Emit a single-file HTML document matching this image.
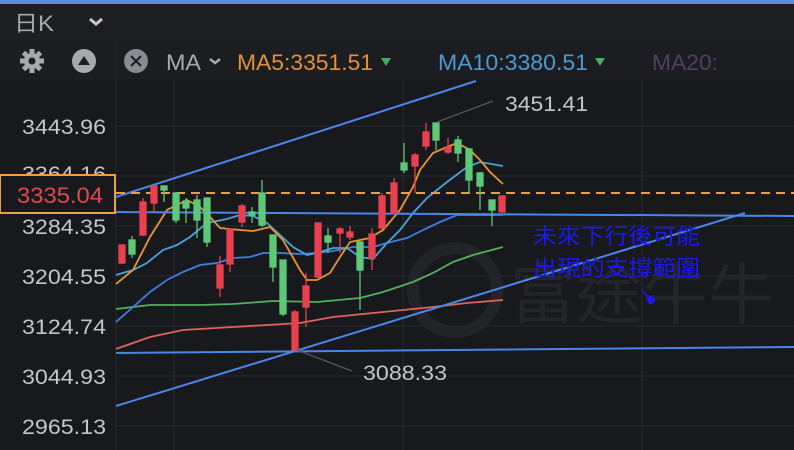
<!DOCTYPE html>
<html><head><meta charset="utf-8"><style>
html,body{margin:0;padding:0;background:#18191d;width:794px;height:450px;overflow:hidden}
svg{display:block}
text{font-family:"Liberation Sans","Noto Sans CJK TC",sans-serif}
</style></head><body>
<svg width="794" height="450" viewBox="0 0 794 450" xmlns="http://www.w3.org/2000/svg">
<rect x="0" y="0" width="794" height="450" fill="#18191d"/>
<rect x="0" y="0" width="794" height="4" fill="#5a8ee6"/>
<rect x="0" y="4" width="794" height="36" fill="#1e1f23"/>
<rect x="0" y="40" width="794" height="40" fill="#1c1d21"/>
<text x="14" y="31" font-size="22" fill="#a8a9ad" textLength="40" lengthAdjust="spacingAndGlyphs">日K</text>
<path d="M90 19 l6 5 l6 -5" stroke="#c8c8c8" stroke-width="3" fill="none"/>
<g transform="translate(32,61)" fill="#a8a9ad">
<circle r="8"/>
<rect x="-2.5" y="-12" width="5" height="24"/>
<rect x="-2.5" y="-12" width="5" height="24" transform="rotate(45)"/>
<rect x="-2.5" y="-12" width="5" height="24" transform="rotate(90)"/>
<rect x="-2.5" y="-12" width="5" height="24" transform="rotate(135)"/>
<circle r="3.5" fill="#1c1d21"/>
</g>
<circle cx="84" cy="61" r="12" fill="#a8a9ad"/>
<path d="M78 65 L84 56 L90 65Z" fill="#1c1d21"/>
<line x1="116" y1="40" x2="116" y2="450" stroke="#25262b" stroke-width="1"/>
<circle cx="136" cy="61" r="12" fill="#8a8b90"/>
<path d="M131 56 L141 66 M141 56 L131 66" stroke="#1c1d21" stroke-width="2"/>
<text x="166" y="70" font-size="22" fill="#a8a9ad" textLength="35" lengthAdjust="spacingAndGlyphs">MA</text>
<path d="M210 59 l5 4 l5 -4" stroke="#a8a9ad" stroke-width="2.5" fill="none"/>
<text x="237" y="70" font-size="22" fill="#e0913a" textLength="136" lengthAdjust="spacingAndGlyphs">MA5:3351.51</text>
<path d="M381 58 L391 58 L386 66Z" fill="#3fb060"/>
<text x="438" y="70" font-size="22" fill="#4a9ad0" textLength="150" lengthAdjust="spacingAndGlyphs">MA10:3380.51</text>
<path d="M595 58 L605 58 L600 66Z" fill="#3fb060"/>
<text x="652" y="70" font-size="22" fill="#4f4060" textLength="66" lengthAdjust="spacingAndGlyphs">MA20:</text>

<g stroke="#26272c" stroke-width="1.3">
<line x1="116" y1="126" x2="794" y2="126"/><line x1="116" y1="176" x2="794" y2="176"/>
<line x1="116" y1="226" x2="794" y2="226"/><line x1="116" y1="276" x2="794" y2="276"/>
<line x1="116" y1="326" x2="794" y2="326"/><line x1="116" y1="376" x2="794" y2="376"/>
<line x1="116" y1="426" x2="794" y2="426"/>
<line x1="174" y1="80" x2="174" y2="450"/><line x1="403" y1="80" x2="403" y2="450"/><line x1="642" y1="80" x2="642" y2="450"/>
</g>

<g opacity="0.9">
<circle cx="455" cy="290" r="42" fill="none" stroke="#25262a" stroke-width="12"/>
<text x="510" y="318" font-size="66" fill="#26272b">富途牛牛</text>
</g>

<g font-size="21" fill="#c4c5c9">
<text x="22" y="134" textLength="84" lengthAdjust="spacingAndGlyphs">3443.96</text>
<text x="22" y="181" textLength="84" lengthAdjust="spacingAndGlyphs">3364.16</text>
<text x="22" y="234" textLength="84" lengthAdjust="spacingAndGlyphs">3284.35</text>
<text x="22" y="284" textLength="84" lengthAdjust="spacingAndGlyphs">3204.55</text>
<text x="22" y="334" textLength="84" lengthAdjust="spacingAndGlyphs">3124.74</text>
<text x="22" y="384" textLength="84" lengthAdjust="spacingAndGlyphs">3044.93</text>
<text x="22" y="434" textLength="84" lengthAdjust="spacingAndGlyphs">2965.13</text>
</g>
<rect x="0" y="175" width="115" height="38" fill="#18191d" stroke="#e8a040" stroke-width="2"/>
<text x="17" y="203" font-size="22" fill="#e8454f" textLength="86" lengthAdjust="spacingAndGlyphs">3335.04</text>

<g fill="none" stroke-width="1.8">
<polyline stroke="#e0625c" points="116,349 150,337 183,330 233,327 267,325 300,323 333,317 383,312 433,307 467,303 503,300"/>
<polyline stroke="#4fb060" points="116,309 150,305 200,305 233,304 273,301 317,302 360,298 383,292 413,282 433,273 453,262 473,255 503,247"/>
<polyline stroke="#3c7fe0" points="116,322 133,307 150,292 167,280 183,272 200,265 217,263 233,258 250,257 263,253 280,253 300,254 317,253 333,251 353,247 373,247 387,243 407,238 423,230 440,222 457,215 503,215"/>
<polyline stroke="#4aa3d8" points="116,275 133,270 147,263 163,250 177,245 190,237 207,223 227,219 240,215 253,216 267,223 280,235 293,247 307,255 320,252 333,248 347,248 360,257 373,259 387,243 400,230 413,213 427,198 447,182 467,167 480,162 503,166"/>
<polyline stroke="#e8952e" points="116,284 133,270 150,237 167,210 187,200 200,207 210,217 220,228 240,230 253,231 270,227 283,240 300,270 307,280 317,280 330,273 340,257 350,242 370,238 383,230 400,210 413,187 420,170 433,153 447,147 457,143 470,150 480,160 490,172 503,184"/>
</g>

<g stroke="#4a86e8" stroke-width="2" fill="none">
<line x1="116" y1="197" x2="476" y2="81"/>
<line x1="116" y1="406" x2="745" y2="213"/>
<line x1="116" y1="212" x2="794" y2="216"/>
<line x1="116" y1="353" x2="794" y2="347"/>
</g>
<line x1="116" y1="193" x2="794" y2="193" stroke="#e8a040" stroke-width="2" stroke-dasharray="9,6"/>

<g stroke-width="1.3">
<g fill="#e8404e" stroke="#e8404e">
<line x1="122" y1="244" x2="122" y2="264"/><rect x="119" y="245" width="6" height="18"/>
<line x1="143" y1="198" x2="143" y2="236"/><rect x="140" y="202" width="6" height="33"/>
<line x1="154" y1="186" x2="154" y2="212"/><rect x="151" y="186" width="6" height="17"/>
<line x1="220" y1="256" x2="220" y2="297"/><rect x="217" y="265" width="6" height="23"/>
<line x1="230" y1="229" x2="230" y2="272"/><rect x="227" y="229" width="6" height="35"/>
<line x1="242" y1="204" x2="242" y2="227"/><rect x="239" y="206" width="6" height="16"/>
<line x1="295" y1="310" x2="295" y2="350"/><rect x="292" y="312" width="6" height="38"/>
<line x1="306" y1="273" x2="306" y2="327"/><rect x="303" y="286" width="6" height="21"/>
<line x1="318" y1="223" x2="318" y2="278"/><rect x="315" y="223" width="6" height="54"/>
<line x1="340" y1="227" x2="340" y2="253"/><rect x="337" y="229" width="6" height="4"/>
<line x1="350" y1="226" x2="350" y2="240"/><rect x="347" y="232" width="6" height="5"/>
<line x1="372" y1="228" x2="372" y2="270"/><rect x="369" y="234" width="6" height="24"/>
<line x1="382" y1="193" x2="382" y2="230"/><rect x="379" y="196" width="6" height="32"/>
<line x1="394" y1="178" x2="394" y2="214"/><rect x="391" y="183" width="6" height="30"/>
<line x1="415" y1="153" x2="415" y2="193"/><rect x="412" y="155" width="6" height="11"/>
<line x1="426" y1="123" x2="426" y2="150"/><rect x="423" y="132" width="6" height="14"/>
<line x1="448" y1="138" x2="448" y2="154"/><rect x="445" y="147" width="6" height="5"/>
<rect x="499" y="196" width="6" height="16"/>
</g>
<g fill="#5cc878" stroke="#5cc878">
<line x1="132" y1="236" x2="132" y2="258"/><rect x="129" y="240" width="6" height="14"/>
<line x1="164" y1="186" x2="164" y2="202"/><rect x="161" y="186" width="6" height="4"/>
<line x1="176" y1="192" x2="176" y2="223"/><rect x="173" y="193" width="6" height="27"/>
<line x1="186" y1="198" x2="186" y2="223"/><rect x="183" y="201" width="6" height="7"/>
<line x1="197" y1="195" x2="197" y2="238"/><rect x="194" y="200" width="6" height="20"/>
<line x1="207" y1="198" x2="207" y2="247"/><rect x="204" y="198" width="6" height="44"/>
<line x1="252" y1="207" x2="252" y2="223"/><rect x="249" y="212" width="6" height="3"/>
<line x1="262" y1="180" x2="262" y2="227"/><rect x="259" y="193" width="6" height="32"/>
<line x1="273" y1="235" x2="273" y2="282"/><rect x="270" y="235" width="6" height="32"/>
<line x1="283" y1="260" x2="283" y2="316"/><rect x="280" y="260" width="6" height="54"/>
<line x1="328" y1="228" x2="328" y2="253"/><rect x="325" y="236" width="6" height="6"/>
<line x1="360" y1="241" x2="360" y2="310"/><rect x="357" y="242" width="6" height="28"/>
<line x1="404" y1="143" x2="404" y2="173"/><rect x="401" y="163" width="6" height="7"/>
<line x1="436" y1="123" x2="436" y2="150"/><rect x="433" y="123" width="6" height="17"/>
<line x1="458" y1="136" x2="458" y2="162"/><rect x="455" y="140" width="6" height="13"/>
<line x1="469" y1="148" x2="469" y2="193"/><rect x="466" y="149" width="6" height="31"/>
<line x1="480" y1="172" x2="480" y2="210"/><rect x="477" y="173" width="6" height="13"/>
<line x1="492" y1="200" x2="492" y2="226"/><rect x="489" y="200" width="6" height="10"/>
</g>
</g>

<line x1="437" y1="122" x2="493" y2="101" stroke="#555" stroke-width="1.3"/>
<text x="505" y="111" font-size="21" fill="#c4c5c9" textLength="83" lengthAdjust="spacingAndGlyphs">3451.41</text>
<line x1="297" y1="350" x2="352" y2="371" stroke="#555" stroke-width="1.3"/>
<text x="363" y="380" font-size="21" fill="#c4c5c9" textLength="84" lengthAdjust="spacingAndGlyphs">3088.33</text>

<text x="533" y="244" font-size="22" fill="#1a1af0" textLength="167" lengthAdjust="spacingAndGlyphs">未來下行後可能</text>
<text x="533" y="276" font-size="22" fill="#1a1af0" textLength="167" lengthAdjust="spacingAndGlyphs">出現的支撐範圍</text>
<line x1="642" y1="290" x2="650" y2="299" stroke="#1a1af0" stroke-width="1.5"/>
<circle cx="651" cy="300" r="4" fill="#1a1af0"/>
</svg>
</body></html>
